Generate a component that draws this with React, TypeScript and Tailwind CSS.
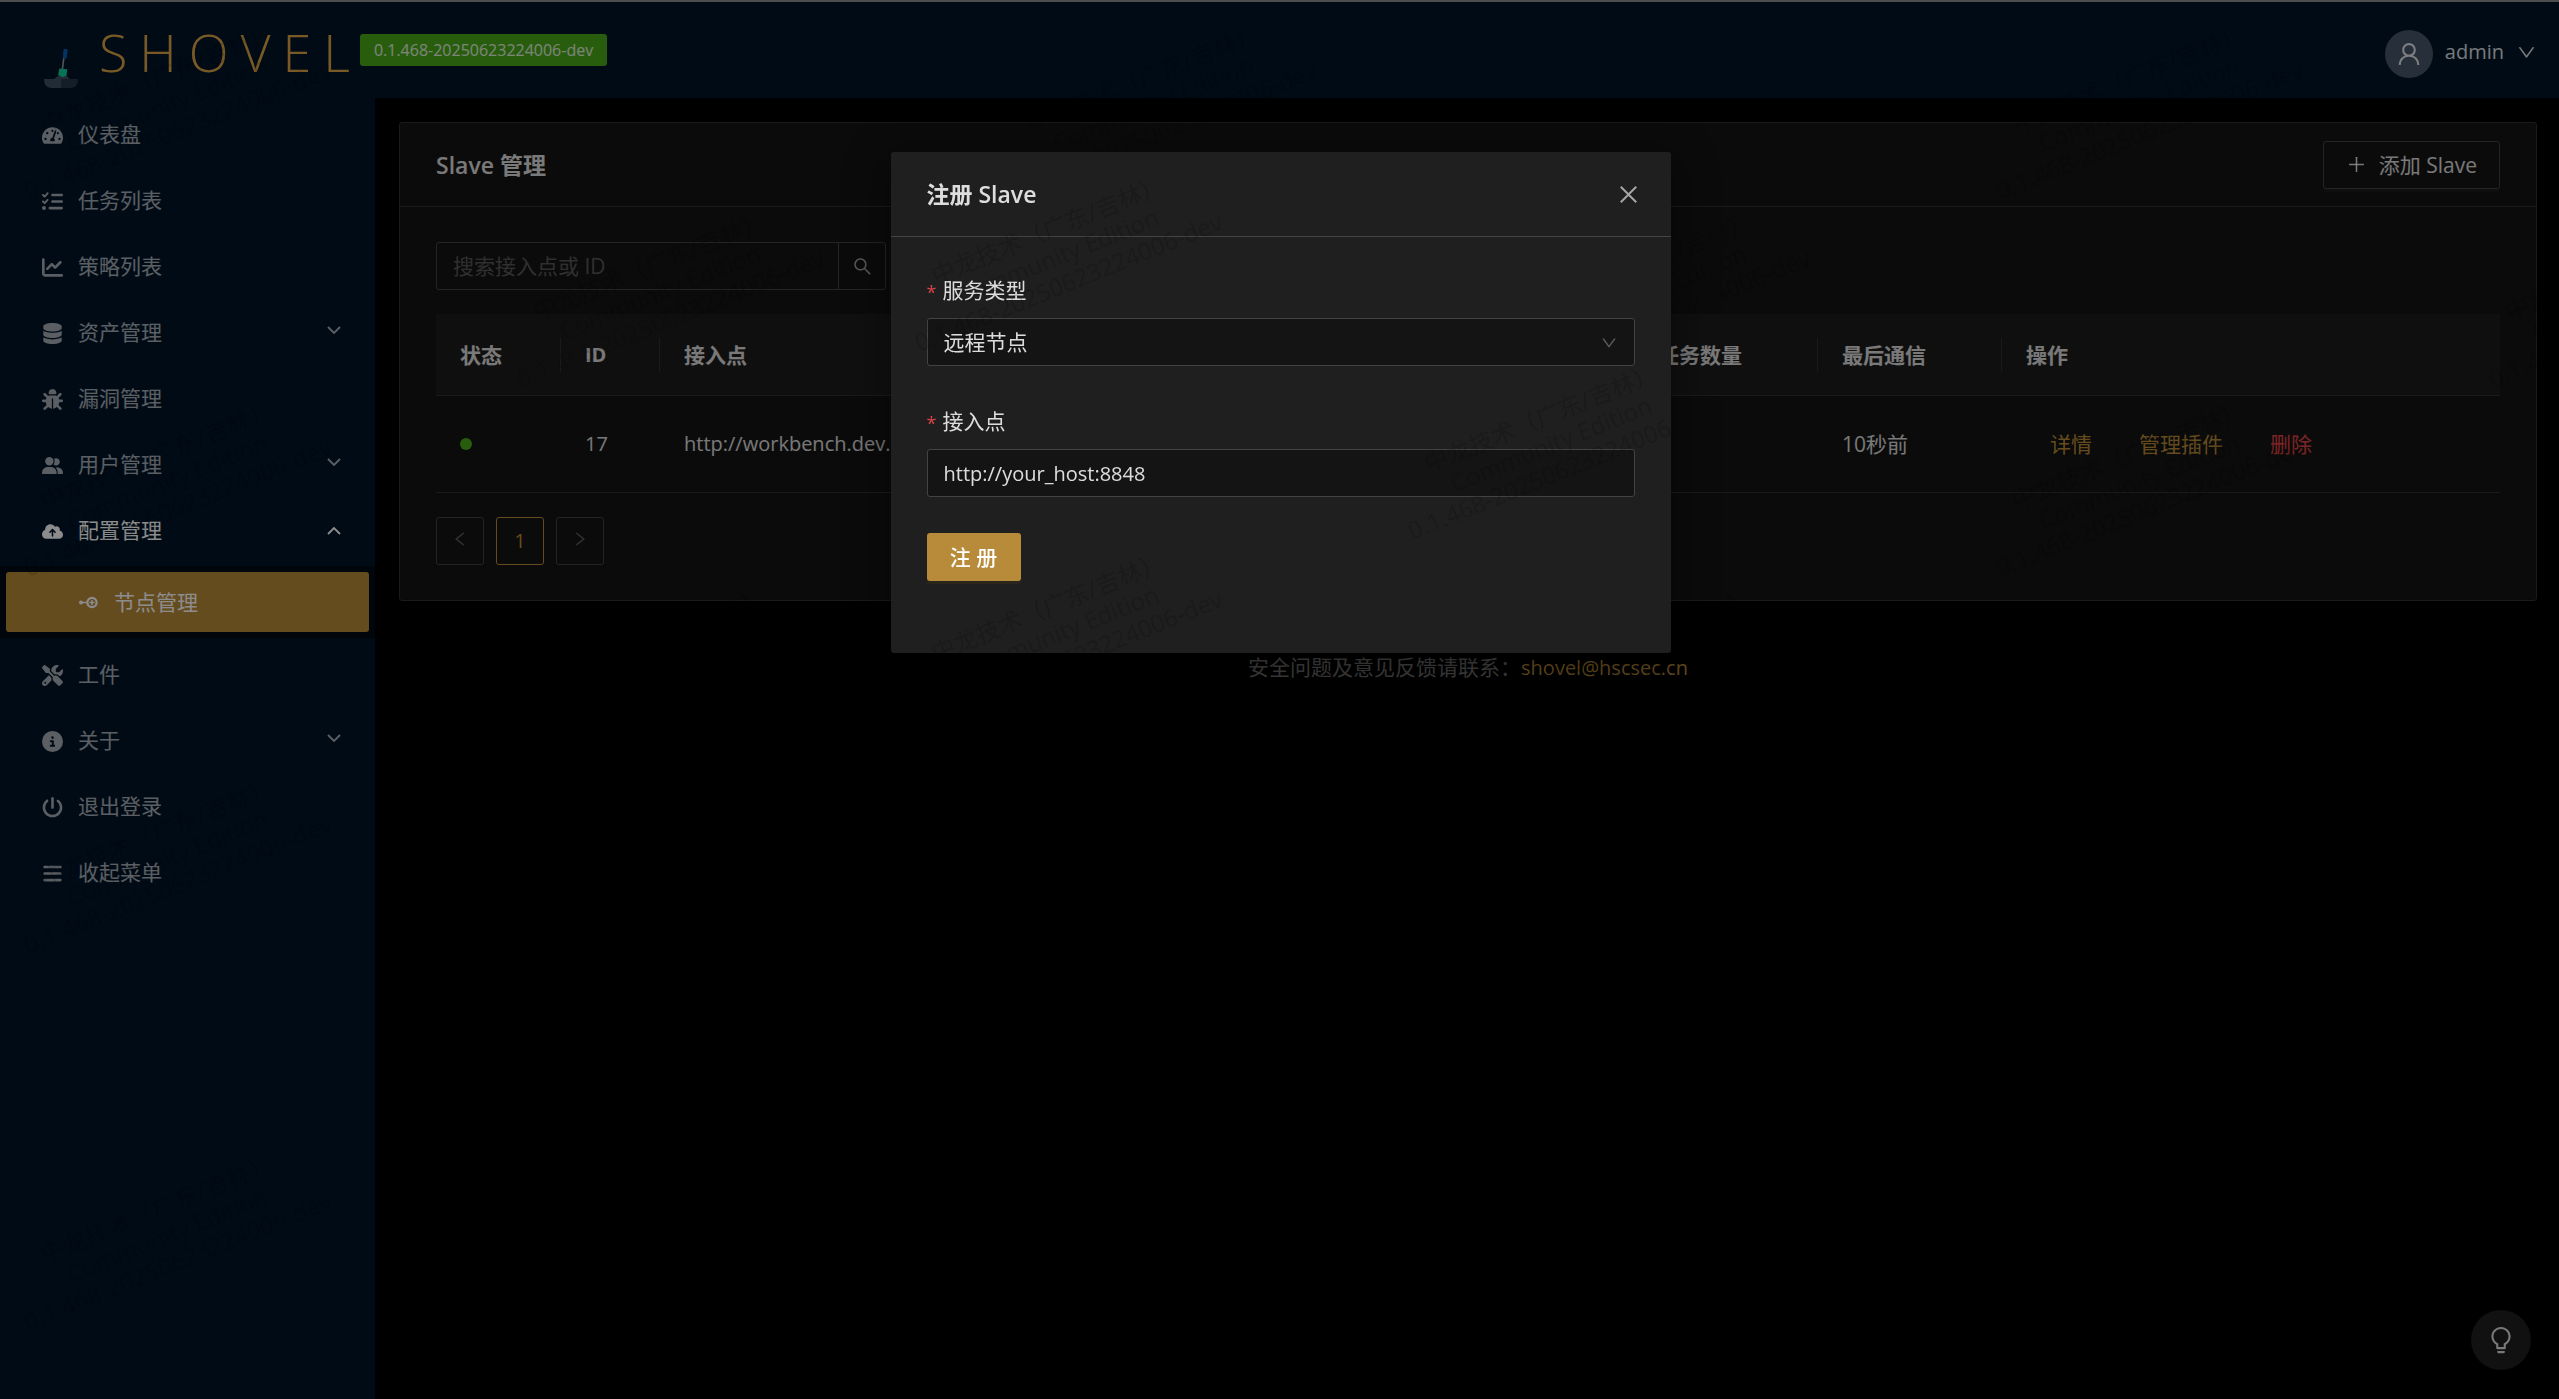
import type { ReactNode } from "react";
import { FaTachometerAlt } from "react-icons/fa";
import {
  FaBars,
  FaBug,
  FaChartLine,
  FaCircleInfo,
  FaCloudArrowUp,
  FaDatabase,
  FaListCheck,
  FaPowerOff,
  FaScrewdriverWrench,
  FaUserGroup,
} from "react-icons/fa6";
import {
  AiOutlineBulb,
  AiOutlineClose,
  AiOutlineDown,
  AiOutlineLeft,
  AiOutlinePlus,
  AiOutlineRight,
  AiOutlineSearch,
  AiOutlineUser,
} from "react-icons/ai";

const VERSION = "0.1.468-20250623224006-dev";

/** Repeats the licence mark in staggered columns over its positioned parent. */
function Watermark({ columns, rows }: { columns: number; rows: number }) {
  return (
    <div
      aria-hidden="true"
      className="pointer-events-none absolute inset-0 flex select-none overflow-hidden"
    >
      {Array.from({ length: columns }, (_, c) => (
        <div key={c} className="w-[493px] shrink-0 odd:pt-0 even:pt-[188px]">
          {Array.from({ length: rows }, (_, r) => (
            <div key={r} className="h-[377px]">
              <div className="flex h-[208px] w-[334px] -rotate-[22deg] flex-col items-center justify-center whitespace-nowrap text-[24px] leading-[28px] text-black/15">
                <span>中龙技术（广东/吉林）</span>
                <span>Community Edition</span>
                <span>{VERSION}</span>
              </div>
            </div>
          ))}
        </div>
      ))}
    </div>
  );
}

function ShovelLogo() {
  return (
    <svg width="36" height="40" viewBox="0 0 36 40" aria-hidden="true">
      <path d="M20.800 10L19.300 22" stroke="#8d99a5" strokeWidth="1.600" />
      <path
        d="M21.800 1h1.400a1.400 1.400 0 0 1 1.400 1.600l-.9 6.800a1.400 1.400 0 0 1-1.400 1.200h-1a1.400 1.400 0 0 1-1.400-1.600l.5-6.600a1.400 1.400 0 0 1 1.400-1.400z"
        fill="#0560b4"
      />
      <path d="M10.500 31.500l6-5h5.500l5.500 5z" fill="#3e4f60" />
      <path d="M1 31h17v9H8.500C3.500 40 1 36.500 1 31z" fill="#3e5063" />
      <path d="M18 31h17c0 5.500-2.500 9-7.500 9H18z" fill="#25384b" />
      <path d="M16.300 20.500l8 .8-.8 6.500-4.100 1.500-4.200-2.500z" fill="#0bd19a" />
    </svg>
  );
}

function NodeIcon() {
  return (
    <svg width="21" height="21" viewBox="0 0 21 21" aria-hidden="true">
      <circle cx="3" cy="10.500" r="2" fill="currentColor" />
      <path d="M4 10.500h6" stroke="currentColor" strokeWidth="1.400" />
      <circle cx="14" cy="10.500" r="4.600" fill="none" stroke="currentColor" strokeWidth="2.200" />
      <path d="M11.500 10.500h5M14 8v5" stroke="currentColor" strokeWidth="1.500" />
    </svg>
  );
}

function Caret({ up }: { up?: boolean }) {
  return (
    <svg
      width="14"
      height="10"
      viewBox="0 0 14 10"
      fill="none"
      stroke="currentColor"
      strokeWidth="1.900"
      aria-hidden="true"
      className={up ? "" : "mb-1.5"}
    >
      <path d={up ? "M1 8l6-6 6 6" : "M1 2l6 6 6-6"} />
    </svg>
  );
}

type Item = { icon: ReactNode; label: string; caret?: "up" | "down" };

const upperItems: Item[] = [
  { icon: <FaTachometerAlt />, label: "仪表盘" },
  { icon: <FaListCheck />, label: "任务列表" },
  { icon: <FaChartLine />, label: "策略列表" },
  { icon: <FaDatabase />, label: "资产管理", caret: "down" },
  { icon: <FaBug />, label: "漏洞管理" },
  { icon: <FaUserGroup />, label: "用户管理", caret: "down" },
  { icon: <FaCloudArrowUp />, label: "配置管理", caret: "up" },
];

const lowerItems: Item[] = [
  { icon: <FaScrewdriverWrench />, label: "工件" },
  { icon: <FaCircleInfo />, label: "关于", caret: "down" },
  { icon: <FaPowerOff />, label: "退出登录" },
  { icon: <FaBars />, label: "收起菜单" },
];

function MenuItem({ icon, label, caret }: Item) {
  const open = caret === "up";
  return (
    <li>
      <button
        type="button"
        aria-expanded={caret ? open : undefined}
        className={
          open
            ? "flex h-[66px] w-full items-center gap-[15px] pl-[42px] pr-[34px] text-white"
            : "flex h-[66px] w-full items-center gap-[15px] pl-[42px] pr-[34px] text-white/65"
        }
      >
        {icon}
        <span className="flex-1 pb-0.5 text-left">{label}</span>
        {caret && <Caret up={open} />}
      </button>
    </li>
  );
}

function Sidebar() {
  return (
    <nav className="w-[375px] shrink-0 bg-[#001529] pt-1">
      <ul>
        {upperItems.map((i) => (
          <MenuItem key={i.label} {...i} />
        ))}
      </ul>
      <div className="mb-1 mt-0.5 bg-[#000c17] p-1.5">
        <a
          href="#nodes"
          aria-current="page"
          className="flex h-[60px] items-center gap-[15px] rounded-[3px] bg-[#b88a37] pl-[72px] text-white"
        >
          <NodeIcon />
          节点管理
        </a>
      </div>
      <ul>
        {lowerItems.map((i) => (
          <MenuItem key={i.label} {...i} />
        ))}
      </ul>
    </nav>
  );
}

function Header() {
  return (
    <header className="flex h-24 items-start bg-[#001529] pl-[43px] pr-[22px]">
      <div className="pt-[46px]">
        <ShovelLogo />
      </div>
      <h1 className="ml-5 pt-3 text-[52px] font-light leading-[76px] tracking-[12px] text-[#dca545]">
        SHOVEL
      </h1>
      <span className="-ml-0.5 mt-8 h-8 rounded-[3px] bg-[#49aa19] px-3.5 text-[16px] leading-8 text-white/85">
        {VERSION}
      </span>
      <button type="button" className="ml-auto flex items-center gap-3 pt-7 text-white/85">
        <span className="flex size-12 items-center justify-center rounded-full bg-[#46566a] text-[28px]">
          <AiOutlineUser />
        </span>
        <span className="pb-1 text-[20px]">admin</span>
        <AiOutlineDown className="mb-1 text-[21px]" />
      </button>
    </header>
  );
}

const headCell =
  "relative h-[82px] border-b border-[#303030] bg-[#1d1d1d] px-6 text-left font-bold";
const headDivider =
  "after:absolute after:right-0 after:top-6 after:h-[34px] after:w-px after:bg-[#303030]";

function SlaveTable() {
  return (
    <table className="mt-6 w-full table-fixed border-separate border-spacing-0">
      <colgroup>
        <col className="w-[125px]" />
        <col className="w-[99px]" />
        <col />
        <col className="w-[184px]" />
        <col className="w-[184px]" />
        <col className="w-[498px]" />
      </colgroup>
      <thead>
        <tr>
          <th className={`${headCell} ${headDivider}`}>状态</th>
          <th className={`${headCell} ${headDivider}`}>
            <span className="text-[20px]">ID</span>
          </th>
          <th className={`${headCell} ${headDivider}`}>接入点</th>
          <th className={`${headCell} ${headDivider}`}>任务数量</th>
          <th className={`${headCell} ${headDivider}`}>最后通信</th>
          <th className={headCell}>操作</th>
        </tr>
      </thead>
      <tbody>
        <tr className="[&>td]:h-[97px] [&>td]:border-b [&>td]:border-[#303030] [&>td]:px-6">
          <td>
            <span role="img" aria-label="在线" className="block size-3 rounded-full bg-[#49aa19]" />
          </td>
          <td className="text-[20px]">17</td>
          <td className="text-[20px]">http://workbench.dev.c</td>
          <td />
          <td>10秒前</td>
          <td>
            <div className="flex gap-[47px] pl-6">
              <a href="#detail" className="text-[#b88a37]">详情</a>
              <a href="#plugins" className="text-[#b88a37]">管理插件</a>
              <a href="#delete" className="text-[#e04446]">删除</a>
            </div>
          </td>
        </tr>
      </tbody>
    </table>
  );
}

function SlaveCard() {
  return (
    <section className="rounded-[3px] border border-[#303030] bg-[#141414]">
      <div className="flex h-[84px] items-center justify-between border-b border-[#303030] px-9">
        <h2 className="text-[23px] font-semibold">Slave 管理</h2>
        <button
          type="button"
          className="flex h-12 items-center gap-3 rounded-[3px] border border-[#434343] px-[22px] shadow-[0_3px_0_#1c1c1c]"
        >
          <AiOutlinePlus />
          <span>添加 Slave</span>
        </button>
      </div>
      <div className="px-9 py-[35px]">
        <form className="flex w-[450px]" role="search">
          <input
            type="text"
            aria-label="搜索接入点或 ID"
            placeholder="搜索接入点或 ID"
            className="h-12 min-w-0 flex-1 rounded-l-[3px] border border-[#434343] bg-transparent px-4 placeholder:text-white/30"
          />
          <button
            type="button"
            aria-label="搜索"
            className="-ml-px flex size-12 items-center justify-center rounded-r-[3px] border border-[#434343] text-white/60"
          >
            <AiOutlineSearch />
          </button>
        </form>
        <SlaveTable />
        <div className="mt-6 flex gap-3">
          <button
            type="button"
            aria-label="上一页"
            disabled
            className="flex size-12 items-center justify-center rounded-[3px] border border-[#434343] pb-1 text-[18px] text-white/30"
          >
            <AiOutlineLeft />
          </button>
          <button
            type="button"
            aria-current="page"
            className="flex size-12 items-center justify-center rounded-[3px] border border-[#b88a37] text-[20px] font-medium text-[#b88a37]"
          >
            1
          </button>
          <button
            type="button"
            aria-label="下一页"
            disabled
            className="flex size-12 items-center justify-center rounded-[3px] border border-[#434343] pb-1 text-[18px] text-white/30"
          >
            <AiOutlineRight />
          </button>
        </div>
      </div>
    </section>
  );
}

function FieldLabel({ htmlFor, children }: { htmlFor: string; children: ReactNode }) {
  return (
    <label htmlFor={htmlFor} className="mb-[9px] flex h-[38px] items-center gap-1.5">
      <span aria-hidden="true" className="pt-1 text-[18px] font-medium text-[#dc4446]">
        *
      </span>
      {children}
    </label>
  );
}

function RegisterDialog() {
  return (
    <div
      role="dialog"
      aria-modal="true"
      aria-labelledby="register-title"
      className="relative h-[501px] w-[780px] rounded-[3px] bg-[#1f1f1f] text-white/85 shadow-[0_9px_42px_12px_rgba(0,0,0,0.3)]"
    >
      <div className="flex h-[85px] items-center justify-between border-b border-[#434343] px-9">
        <h2 id="register-title" className="text-[23px] font-semibold">
          注册 Slave
        </h2>
        <button type="button" aria-label="关闭" className="-mr-1.5 text-[25px] text-white/60">
          <AiOutlineClose />
        </button>
      </div>
      <form className="px-9 pt-[34px]">
        <FieldLabel htmlFor="service-type">服务类型</FieldLabel>
        <div className="relative">
          <select
            id="service-type"
            className="h-12 w-full appearance-none rounded-[3px] border border-[#434343] bg-[#141414] px-4"
          >
            <option>远程节点</option>
          </select>
          <AiOutlineDown className="pointer-events-none absolute right-[17px] top-4 text-[18px] text-white/30" />
        </div>
        <div className="mt-9">
          <FieldLabel htmlFor="access-point">接入点</FieldLabel>
          <input
            id="access-point"
            type="text"
            defaultValue="http://your_host:8848"
            className="h-12 w-full rounded-[3px] border border-[#434343] bg-[#141414] px-4 text-[20px]"
          />
        </div>
        <button
          type="button"
          className="mt-9 h-12 w-[94px] rounded-[3px] bg-[#b88b3a] font-medium text-white shadow-[0_3px_0_#2b261c]"
        >
          注 册
        </button>
      </form>
      <Watermark columns={2} rows={2} />
    </div>
  );
}

export default function App() {
  return (
    <div className="relative flex min-h-screen flex-col bg-black font-['Open_Sans','Noto_Sans_CJK_SC',sans-serif] text-[21px] leading-8 text-white/85">
      <div className="h-0.5 bg-[#8c8c8c]" />
      <Header />
      <div className="flex flex-1">
        <Sidebar />
        <main className="min-w-0 flex-1 pl-6 pr-[22px] pt-6">
          <SlaveCard />
          <footer className="pt-[50px] text-center text-white/45">
            安全问题及意见反馈请联系：
            <a href="mailto:shovel@hscsec.cn" className="text-[20px] text-[#b88a37]">
              shovel@hscsec.cn
            </a>
          </footer>
        </main>
      </div>
      <button
        type="button"
        aria-label="提示"
        className="fixed bottom-[29px] right-7 flex size-[60px] items-center justify-center rounded-full bg-[#1f1f1f] text-[30px] text-white/85"
      >
        <AiOutlineBulb />
      </button>
      <Watermark columns={6} rows={4} />
      <div className="fixed inset-0 flex items-start justify-center bg-black/45 pl-0.5 pt-[152px]">
        <RegisterDialog />
      </div>
    </div>
  );
}
